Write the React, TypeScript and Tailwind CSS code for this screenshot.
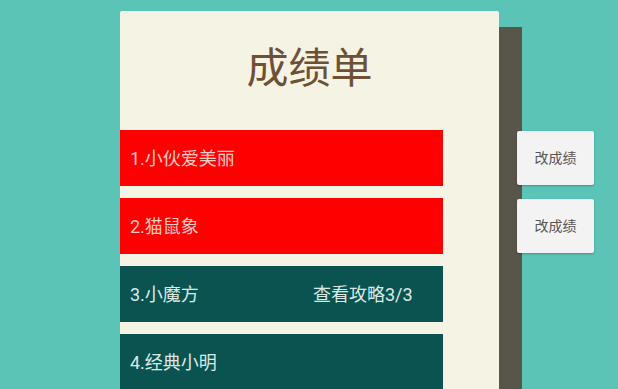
import React from "react";

interface Row {
  label: string;
  extra?: string;
  bg: string;
  fg: string;
}

const rows: Row[] = [
  { label: "1.小伙爱美丽", bg: "bg-[#fe0000]", fg: "text-[#f8c8c2]" },
  { label: "2.猫鼠象", bg: "bg-[#fe0000]", fg: "text-[#f8c8c2]" },
  { label: "3.小魔方", extra: "查看攻略3/3", bg: "bg-[#0b5350]", fg: "text-[#dbe9e4]" },
  { label: "4.经典小明", bg: "bg-[#0b5350]", fg: "text-[#dbe9e4]" },
];

const App: React.FC = () => {
  return (
    <div
      className="w-[618px] h-[389px] overflow-hidden bg-[#5bc4b6] flex items-start"
      style={{ fontFamily: 'Roboto, "Noto Sans CJK SC", sans-serif' }}
    >
      <div className="ml-[120px] mt-[11px] w-[379px] h-[400px] bg-[#f5f3e4] rounded-t-[2px] flex flex-col">
        <div className="h-[119px] flex items-center justify-center pb-[4px]">
          <h1 className="text-[42px] leading-none text-[#6e5135]">成绩单</h1>
        </div>
        <div className="flex flex-col gap-[12px]">
          {rows.map(row => (
            <div
              key={row.label}
              className={`w-[323px] h-[56px] ${row.bg} ${row.fg} flex items-center pl-[10px] text-[18px]`}
            >
              <span className="w-[183px]">{row.label}</span>
              {row.extra && <span>{row.extra}</span>}
            </div>
          ))}
        </div>
      </div>
      <div className="mt-[27px] w-[23px] h-[400px] bg-[#58554a]" />
      <div className="-ml-[5px] mt-[131px] flex flex-col gap-[14px]">
        {[0, 1].map(i => (
          <button
            key={i}
            className="w-[77px] h-[54px] bg-[#f3f3f3] rounded-[2px] shadow-[0_1px_2px_rgba(0,0,0,0.25)] text-[14px] text-[#555] flex items-center justify-center"
          >
            改成绩
          </button>
        ))}
      </div>
    </div>
  );
};

export default App;
